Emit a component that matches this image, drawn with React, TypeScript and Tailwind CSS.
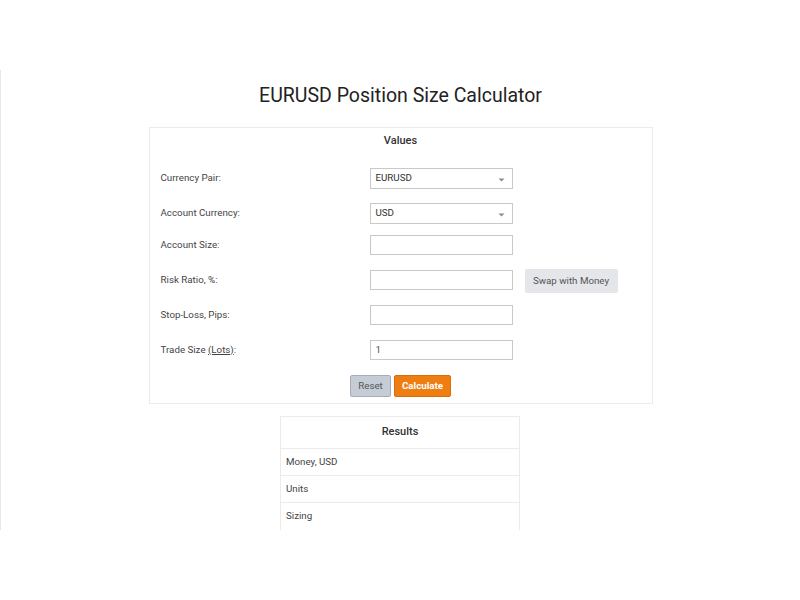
import React from 'react';

const Caret: React.FC = () => (
  <svg width="7" height="4" viewBox="0 0 7 4" className="absolute right-[7px] top-[9px]">
    <path d="M0.5 0.5 L6.5 0.5 L3.5 3.5 Z" fill="#8a8a8a" />
  </svg>
);

const SelectBox: React.FC<{ value: string }> = ({ value }) => (
  <div className="relative w-[143px] h-[21px] border border-[#c9c9c9] bg-white pl-[5px] flex items-center text-[9.75px] text-[#333]">
    {value}
    <Caret />
  </div>
);

const InputBox: React.FC<{ value?: string }> = ({ value }) => (
  <div className="w-[143px] h-[20px] border border-[#c9c9c9] bg-white pl-[5px] flex items-center text-[9.75px] text-[#555]">
    {value}
  </div>
);

const Row: React.FC<{ label: React.ReactNode; cls: string; children: React.ReactNode; extra?: React.ReactNode }> = ({
  label,
  cls,
  children,
  extra,
}) => (
  <div className={`flex items-center ${cls}`}>
    <div className="w-[209px] text-[9.75px] text-[#444]">{label}</div>
    {children}
    {extra}
  </div>
);

export default function App() {
  return (
    <div className="w-[800px] h-[600px] bg-white font-['Roboto',sans-serif]">
      <div className="h-[70px]" />
      <div className="h-[460px] border-l border-[#e8e8e8] overflow-hidden">
        <h1 className="text-center text-[19.5px] text-[#222] leading-[24px] pt-[14px]">
          EURUSD Position Size Calculator
        </h1>

        <div className="mx-auto mt-[19px] w-[504px] border border-[#ebebeb] pl-[11px] pb-[6px]">
          <div className="text-center text-[11px] font-medium text-[#333] pt-[5px] leading-[16px] pr-[11px]">Values</div>

          <Row label="Currency Pair:" cls="h-[21px] mt-[19px]">
            <SelectBox value="EURUSD" />
          </Row>
          <Row label="Account Currency:" cls="h-[21px] mt-[14px]">
            <SelectBox value="USD" />
          </Row>
          <Row label="Account Size:" cls="h-[20px] mt-[11px]">
            <InputBox />
          </Row>
          <Row
            label="Risk Ratio, %:"
            cls="h-[20px] mt-[15px]"
            extra={
              <div className="ml-[12px] mt-[2px] w-[93px] h-[24px] shrink-0 bg-[#e4e6e9] flex items-center justify-center text-[9.75px] text-[#555] rounded-[2px]">
                Swap with Money
              </div>
            }
          >
            <InputBox />
          </Row>
          <Row label="Stop-Loss, Pips:" cls="h-[20px] mt-[15px]">
            <InputBox />
          </Row>
          <Row
            label={
              <span>
                Trade Size <span className="underline">(Lots)</span>:
              </span>
            }
            cls="h-[20px] mt-[15px]"
          >
            <InputBox value="1" />
          </Row>

          <div className="flex justify-center gap-[3px] mt-[15px] pr-[11px]">
            <div className="w-[41px] h-[22px] bg-[#c6ccd5] border border-[#a5adb9] rounded-[2px] flex items-center justify-center text-[9.75px] text-[#555]">
              Reset
            </div>
            <div className="w-[57px] h-[22px] bg-[#ee7e12] border border-[#d96f0a] rounded-[2px] flex items-center justify-center text-[9.75px] font-bold text-white">
              Calculate
            </div>
          </div>
        </div>

        <div className="mt-[12px] ml-[279px] w-[240px] border border-b-0 border-[#ebebeb] text-[9.75px] text-[#444]">
          <div className="h-[32px] flex items-center justify-center text-[11px] font-medium text-[#333] border-b border-[#ebebeb]">
            Results
          </div>
          <div className="h-[27px] flex items-center pl-[5px] border-b border-[#ebebeb]">Money, USD</div>
          <div className="h-[27px] flex items-center pl-[5px] border-b border-[#ebebeb]">Units</div>
          <div className="h-[30px] flex items-center pl-[5px] pb-[3px]">Sizing</div>
        </div>
      </div>
    </div>
  );
}
